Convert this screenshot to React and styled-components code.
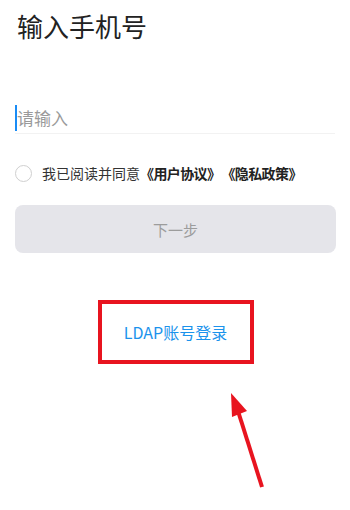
import React from "react";
import styled, { createGlobalStyle } from "styled-components";

const Global = createGlobalStyle`
  html, body { margin: 0; padding: 0; background: #fff; }
  body { font-family: "Noto Sans CJK SC", "Noto Sans", sans-serif; }
`;

const Page = styled.div`
  position: relative;
  width: 350px;
  height: 510px;
  box-sizing: border-box;
  padding: 11px 15px 0 15px;
  display: flex;
  flex-direction: column;
  overflow: hidden;
`;

const Title = styled.h1`
  margin: 0;
  font-size: 26px;
  line-height: 30px;
  font-weight: 400;
  color: #222;
  padding-left: 2px;
`;

const InputRow = styled.div`
  margin-top: 58px;
  height: 34px;
  display: flex;
  align-items: center;
  border-bottom: 1px solid #f2f2f2;
  width: 320px;
`;

const Caret = styled.span`
  width: 2px;
  height: 26px;
  background: #1a8cf5;
  margin-top: 4px;
`;

const Placeholder = styled.span`
  font-size: 17px;
  color: #9a9a9a;
  line-height: 26px;
  margin-top: 4px;
`;

const AgreeRow = styled.div`
  margin-top: 29px;
  display: flex;
  align-items: center;
  height: 20px;
  font-size: 14px;
  color: #333;
  white-space: pre;
`;

const Radio = styled.span`
  width: 15px;
  height: 15px;
  border: 1.5px solid #cfcfcf;
  border-radius: 50%;
  margin-right: 10px;
`;

const Bold = styled.span`
  font-weight: 700;
  color: #222;
  letter-spacing: -0.6px;
  margin-left: ${(p) => p.$gap || 0}px;
`;

const NextButton = styled.div`
  margin-top: 22px;
  height: 48px;
  width: 321px;
  border-radius: 8px;
  background: #e5e5ea;
  color: #9c9c9c;
  font-size: 15px;
  display: flex;
  align-items: center;
  justify-content: center;
`;

const LdapWrap = styled.div`
  margin-top: 47px;
  display: flex;
  justify-content: center;
`;

const LdapBox = styled.div`
  width: 148px;
  height: 56px;
  border: 4px solid #e8141f;
  display: flex;
  align-items: center;
  justify-content: center;
  color: #1b93ec;
  font-size: 16px;
  margin-left: 1px;
`;

const ArrowSvg = styled.svg`
  position: absolute;
  left: 0;
  top: 0;
  pointer-events: none;
`;

export default function App() {
  return (
    <>
      <Global />
      <Page>
        <Title>输入手机号</Title>
        <InputRow>
          <Caret />
          <Placeholder>请输入</Placeholder>
        </InputRow>
        <AgreeRow>
          <Radio />
          <span>我已阅读并同意</span>
          <Bold>《用户协议》</Bold>
          <Bold $gap={1}>《隐私政策》</Bold>
        </AgreeRow>
        <NextButton>下一步</NextButton>
        <LdapWrap>
          <LdapBox>LDAP账号登录</LdapBox>
        </LdapWrap>
        <ArrowSvg width="350" height="510" viewBox="0 0 350 510">
          <line x1="262" y1="487" x2="238" y2="411" stroke="#e8141f" strokeWidth="4" />
          <polygon points="231,393 247,411 232,417" fill="#e8141f" />
        </ArrowSvg>
      </Page>
    </>
  );
}
